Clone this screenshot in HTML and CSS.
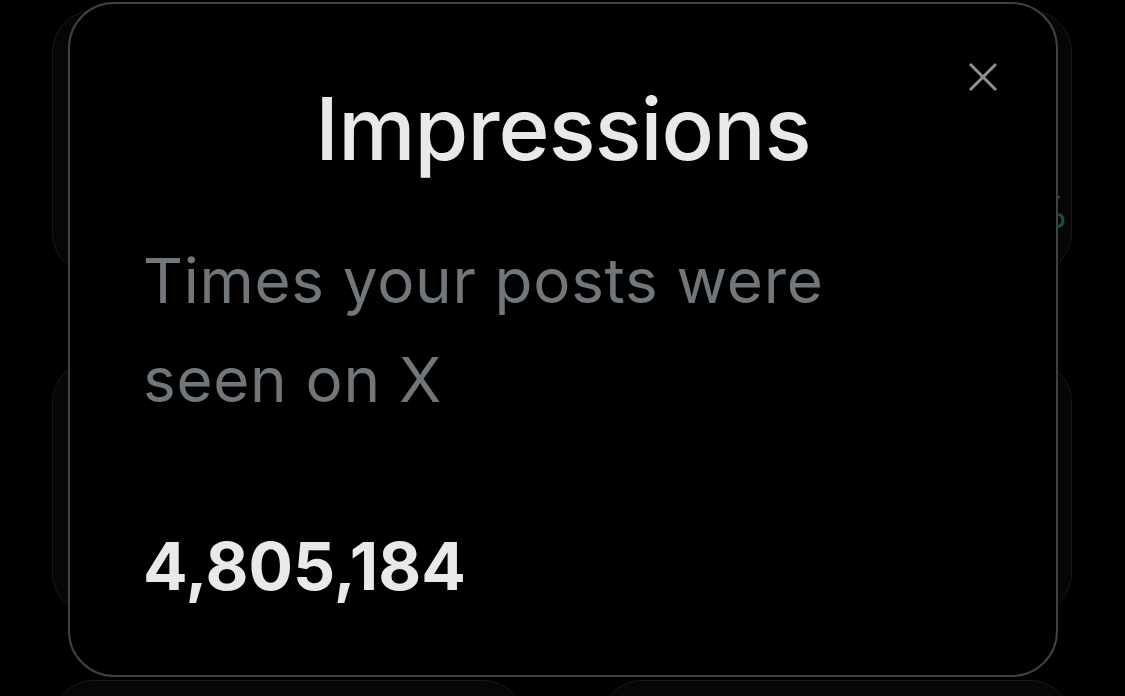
FILE: index.html
```html
<!DOCTYPE html>
<html lang="en">
<head>
    <meta charset="UTF-8">
    <meta name="viewport" content="width=device-width, initial-scale=1.0">
    <title>Impressions</title>
    <link rel="stylesheet" href="styles.css">
</head>
<body>
    <!-- analytics cards behind the sheet (dimmed) -->
    <div class="board">
        <div class="card card-top">
            <span class="trend">%</span>
        </div>
        <div class="card card-mid"></div>
        <div class="card-row">
            <div class="card card-small"></div>
            <div class="card card-small"></div>
        </div>
    </div>

    <div class="sheet">
        <button class="close" aria-label="Close">
            <svg width="30" height="30" viewBox="0 0 30 30">
                <path d="M2 2 L28 28 M28 2 L2 28" stroke="currentColor" stroke-width="3" fill="none"/>
            </svg>
        </button>
        <h1 class="title">Impressions</h1>
        <p class="desc">Times your posts were seen on X</p>
        <div class="value">4,805,184</div>
    </div>
</body>
</html>
```

FILE: styles.css
```css
body {
    margin: 0;
    height: 696px;
    overflow: hidden;
    background: #000;
    font-family: Inter, "Noto Sans", sans-serif;
}
.board {
    height: 696px;
    box-sizing: border-box;
    overflow: hidden;
    padding: 10px 53px 0 52px;
    display: flex;
    flex-direction: column;
    gap: 85px;
}
.card {
    background: #060607;
    border: 1px solid #1a1a1d;
    border-radius: 42px;
    box-sizing: border-box;
    flex-shrink: 0;
}
.card-top {
    height: 265px;
    display: flex;
    justify-content: flex-end;
    align-items: flex-start;
    padding: 176px 2px 0 0;
}
.trend {
    color: #1d4c43;
    font-size: 42px;
    line-height: 50px;
}
.card-mid {
    height: 255px;
    margin-bottom: -20px;
}
.card-row {
    display: flex;
    gap: 75px;
    flex-shrink: 0;
}
.card-small {
    flex: 1;
    height: 120px;
}
.sheet {
    position: absolute;
    left: 68px;
    top: 2px;
    width: 990px;
    height: 675px;
    box-sizing: border-box;
    background: #000;
    border: 2px solid #3f4245;
    border-radius: 46px;
    padding: 72px 73px 0 73px;
}
.close {
    position: absolute;
    top: 58px;
    right: 58px;
    padding: 0;
    background: none;
    border: none;
    color: #8e9093;
    cursor: pointer;
    display: block;
}
.close svg {
    display: block;
}
.title {
    margin: 0;
    text-align: center;
    color: #e7e9ea;
    font-size: 87px;
    line-height: 106px;
    font-weight: 500;
    letter-spacing: -0.9px;
}
.desc {
    margin: 49px 0 0 0;
    color: #71767b;
    font-size: 62px;
    line-height: 99px;
    font-weight: 400;
    letter-spacing: 0.7px;
    width: 740px;
}
.value {
    margin-top: 97px;
    color: #e7e9ea;
    font-size: 66px;
    line-height: 80px;
    font-weight: 700;
}
```
